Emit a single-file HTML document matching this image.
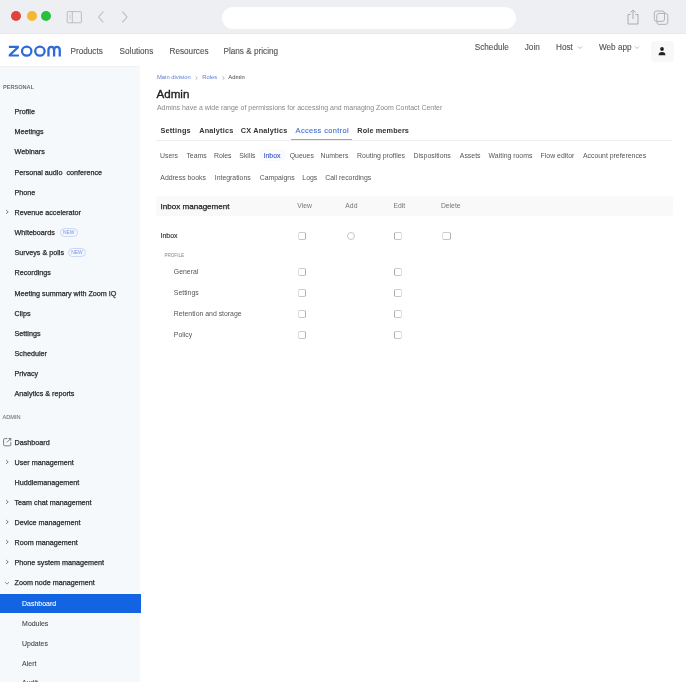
<!DOCTYPE html>
<html><head><meta charset="utf-8"><style>
html,body{margin:0;padding:0;}
body{width:686px;height:682px;overflow:hidden;position:relative;background:#fff;font-family:"Liberation Sans", sans-serif;}
#root{position:absolute;left:0;top:0;width:686px;height:682px;overflow:hidden;background:#fff;filter:blur(0.35px);}
.abs{position:absolute;}
.t{position:absolute;white-space:pre;line-height:1;}
.cb{position:absolute;width:6.3px;height:6.3px;border:0.8px solid #d2d2d2;background:#fff;}
</style></head><body><div id="root">
<!-- browser toolbar -->
<div class="abs" style="left:0;top:0;width:686px;height:34px;background:#edeff2;"></div>
<div class="abs" style="left:0;top:32.6px;width:686px;height:1.2px;background:#e6e8eb;"></div>
<div class="abs" style="left:11.2px;top:11.2px;width:10px;height:10px;border-radius:50%;background:#e0443e;"></div>
<div class="abs" style="left:26.5px;top:11.2px;width:10px;height:10px;border-radius:50%;background:#f5b731;"></div>
<div class="abs" style="left:41.3px;top:11.2px;width:10px;height:10px;border-radius:50%;background:#27c13d;"></div>
<svg class="abs" style="left:66px;top:11px" width="17" height="13" viewBox="0 0 17 13"><rect x="1.2" y="0.6" width="14.2" height="11.2" rx="0.8" fill="none" stroke="#b4b7bb" stroke-width="0.9"/><line x1="6.3" y1="0.6" x2="6.3" y2="11.8" stroke="#b4b7bb" stroke-width="0.9"/><path d="M3.9 3.6 V8.4" stroke="#c4c6c9" stroke-width="0.7"/></svg>
<svg class="abs" style="left:96px;top:10px" width="10" height="14" viewBox="0 0 10 14"><path d="M7.3 1.6 L2.6 7 L7.3 12.4" fill="none" stroke="#b9bcc0" stroke-width="1.05"/></svg>
<svg class="abs" style="left:120px;top:10px" width="10" height="14" viewBox="0 0 10 14"><path d="M2.4 1.6 L7.1 7 L2.4 12.4" fill="none" stroke="#b9bcc0" stroke-width="1.05"/></svg>
<div class="abs" style="left:222px;top:6.5px;width:293.5px;height:22px;border-radius:11px;background:#fff;"></div>
<svg class="abs" style="left:626px;top:9px" width="14" height="16" viewBox="0 0 14 16"><path d="M4.5 5.5 H2 V15 H12 V5.5 H9.5 M7 10 V1 M4.3 3.6 L7 1 L9.7 3.6" fill="none" stroke="#a9acb0" stroke-width="1"/></svg>
<svg class="abs" style="left:653px;top:10px" width="17" height="16" viewBox="0 0 17 16"><rect x="1.3" y="1.0" width="10.2" height="10.4" rx="2.2" fill="none" stroke="#a9acb0" stroke-width="0.9"/><rect x="3.8" y="3.4" width="11" height="11" rx="2.2" fill="none" stroke="#a9acb0" stroke-width="0.9"/></svg>

<!-- header -->
<svg class="abs" style="left:0;top:0" width="70" height="66" viewBox="0 0 70 66">
<g fill="none" stroke="#2d6bd9" stroke-width="2.3">
</g><path fill="#2d6bd9" d="M8.9 45.75 H18.9 V47.9 L12.0 54.45 H18.9 V56.6 H8.7 V54.45 L15.6 47.9 H8.9 Z"/><g fill="none" stroke="#2d6bd9" stroke-width="2.3">
<ellipse cx="26.7" cy="51.15" rx="4.7" ry="4.45"/>
<ellipse cx="39.9" cy="51.15" rx="4.7" ry="4.45"/>
<path d="M48.45 56.6 V50.2 Q48.45 46.85 51.3 46.85 Q54.1 46.85 54.1 50.2 V56.6 M54.1 50.2 Q54.1 46.85 56.95 46.85 Q59.75 46.85 59.75 50.2 V56.6"/>
</g></svg>
<svg class="abs" style="left:577px;top:45px" width="6" height="5" viewBox="0 0 6 5"><path d="M1 1.5 L3 3.5 L5 1.5" fill="none" stroke="#aaa" stroke-width="0.8"/></svg>
<svg class="abs" style="left:634.3px;top:45px" width="6" height="5" viewBox="0 0 6 5"><path d="M1 1.5 L3 3.5 L5 1.5" fill="none" stroke="#aaa" stroke-width="0.8"/></svg>
<div class="abs" style="left:651px;top:40.5px;width:22.5px;height:21px;border-radius:3px;background:#f8f8f9;"></div>
<svg class="abs" style="left:657px;top:46px" width="10" height="10" viewBox="0 0 10 10"><circle cx="5" cy="3" r="1.9" fill="#222"/><path d="M1.6 9.2 Q1.6 5.9 5 5.9 Q8.4 5.9 8.4 9.2 Z" fill="#222"/></svg>

<!-- sidebar -->
<div class="abs" style="left:0;top:66px;width:140px;height:616px;background:#f5f9fc;border-top:1px solid #f0f1f3;"></div>
<div class="abs" style="left:0;top:593.8px;width:140.6px;height:19px;background:#1364e2;"></div>
<svg class="abs" style="left:4.800000000000001px;top:209.0px" width="5" height="6" viewBox="0 0 5 6"><path d="M1.1 1.0 L3.2 2.9 L1.1 4.8" fill="none" stroke="#666" stroke-width="0.85"/></svg>
<svg class="abs" style="left:4.800000000000001px;top:458.7px" width="5" height="6" viewBox="0 0 5 6"><path d="M1.1 1.0 L3.2 2.9 L1.1 4.8" fill="none" stroke="#666" stroke-width="0.85"/></svg>
<svg class="abs" style="left:4.800000000000001px;top:499.0px" width="5" height="6" viewBox="0 0 5 6"><path d="M1.1 1.0 L3.2 2.9 L1.1 4.8" fill="none" stroke="#666" stroke-width="0.85"/></svg>
<svg class="abs" style="left:4.800000000000001px;top:519.15px" width="5" height="6" viewBox="0 0 5 6"><path d="M1.1 1.0 L3.2 2.9 L1.1 4.8" fill="none" stroke="#666" stroke-width="0.85"/></svg>
<svg class="abs" style="left:4.800000000000001px;top:539.3px" width="5" height="6" viewBox="0 0 5 6"><path d="M1.1 1.0 L3.2 2.9 L1.1 4.8" fill="none" stroke="#666" stroke-width="0.85"/></svg>
<svg class="abs" style="left:4.800000000000001px;top:559.45px" width="5" height="6" viewBox="0 0 5 6"><path d="M1.1 1.0 L3.2 2.9 L1.1 4.8" fill="none" stroke="#666" stroke-width="0.85"/></svg>
<svg class="abs" style="left:4.0px;top:580.7px" width="7" height="5" viewBox="0 0 7 5"><path d="M1.2 1.2 L3.1 3.0 L5.0 1.2" fill="none" stroke="#666" stroke-width="0.75"/></svg>
<svg class="abs" style="left:2px;top:437px" width="10" height="10" viewBox="0 0 10 10"><path d="M5.3 1.6 H2.6 Q1.6 1.6 1.6 2.6 V7.8 Q1.6 8.8 2.6 8.8 H7.8 Q8.8 8.8 8.8 7.8 V5.2" fill="none" stroke="#666" stroke-width="0.85"/><path d="M4.9 5.4 L8.6 1.7 M6.6 1.5 H8.8 V3.7" fill="none" stroke="#555" stroke-width="0.8"/></svg>
<div class="abs" style="left:60px;top:228.3px;width:17.5px;height:8.5px;border-radius:4.5px;border:0.8px solid #c9d8f5;background:#f3f7ff;box-sizing:border-box;"></div>
<div class="abs" style="left:68.2px;top:248.4px;width:17.5px;height:8.5px;border-radius:4.5px;border:0.8px solid #c9d8f5;background:#f3f7ff;box-sizing:border-box;"></div>
<div class="t" style="left:63.0px;top:230.9px;font-size:4.9px;color:#7b96db;">NEW</div>
<div class="t" style="left:71.2px;top:251.0px;font-size:4.9px;color:#7b96db;">NEW</div>
<svg class="abs" style="left:194px;top:75px" width="5" height="6" viewBox="0 0 5 6"><path d="M1.5 1.3 L3.3 3 L1.5 4.7" fill="none" stroke="#999" stroke-width="0.7"/></svg>
<svg class="abs" style="left:220.8px;top:75px" width="5" height="6" viewBox="0 0 5 6"><path d="M1.5 1.3 L3.3 3 L1.5 4.7" fill="none" stroke="#999" stroke-width="0.7"/></svg>

<!-- main -->
<div class="abs" style="left:156px;top:139.5px;width:516px;height:1px;background:#ededed;"></div>
<div class="abs" style="left:291.2px;top:138.8px;width:61.2px;height:1.2px;background:#88a5e4;"></div>
<div class="abs" style="left:156px;top:196.2px;width:517px;height:20.0px;background:#f9f9f9;border-radius:2px;"></div>
<div class="abs" style="left:259px;top:149px;width:27px;height:12px;border-radius:6px;background:#f8faff;"></div>
<div class="cb" style="left:297.9px;top:231.5px;border-radius:1.8px;border-color:#cdcdcd #b0b0b0 #c6c6c6 #dedede;"></div><div class="cb" style="left:394.2px;top:231.5px;border-radius:1.8px;border-color:#cdcdcd #e0e0e0 #c6c6c6 #acacac;"></div><div class="cb" style="left:442.4px;top:231.5px;border-radius:1.8px;border-color:#cdcdcd #b0b0b0 #c6c6c6 #dedede;"></div><div class="cb" style="left:346.5px;top:231.5px;border-radius:4px;border-color:#c8c8c8;"></div><div class="cb" style="left:297.9px;top:267.5px;border-radius:1.8px;border-color:#cdcdcd #b0b0b0 #c6c6c6 #dedede;"></div><div class="cb" style="left:394.2px;top:267.5px;border-radius:1.8px;border-color:#cdcdcd #e0e0e0 #c6c6c6 #acacac;"></div><div class="cb" style="left:297.9px;top:288.5px;border-radius:1.8px;border-color:#cdcdcd #b0b0b0 #c6c6c6 #dedede;"></div><div class="cb" style="left:394.2px;top:288.5px;border-radius:1.8px;border-color:#cdcdcd #e0e0e0 #c6c6c6 #acacac;"></div><div class="cb" style="left:297.9px;top:309.5px;border-radius:1.8px;border-color:#cdcdcd #b0b0b0 #c6c6c6 #dedede;"></div><div class="cb" style="left:394.2px;top:309.5px;border-radius:1.8px;border-color:#cdcdcd #e0e0e0 #c6c6c6 #acacac;"></div><div class="cb" style="left:297.9px;top:330.5px;border-radius:1.8px;border-color:#cdcdcd #b0b0b0 #c6c6c6 #dedede;"></div><div class="cb" style="left:394.2px;top:330.5px;border-radius:1.8px;border-color:#cdcdcd #e0e0e0 #c6c6c6 #acacac;"></div>

<div class="t" style="left:70.47px;top:47.63px;font-size:8.2px;font-weight:400;color:#555;-webkit-text-stroke:0.12px #555">Products</div>
<div class="t" style="left:119.57px;top:47.63px;font-size:8.2px;font-weight:400;color:#555;-webkit-text-stroke:0.12px #555">Solutions</div>
<div class="t" style="left:169.47px;top:47.63px;font-size:8.2px;font-weight:400;color:#555;-webkit-text-stroke:0.12px #555">Resources</div>
<div class="t" style="left:223.47px;top:47.63px;font-size:8.2px;font-weight:400;color:#555;-webkit-text-stroke:0.12px #555">Plans &amp; pricing</div>
<div class="t" style="left:474.77px;top:43.83px;font-size:8.2px;font-weight:400;color:#555;-webkit-text-stroke:0.12px #555">Schedule</div>
<div class="t" style="left:524.77px;top:43.83px;font-size:8.2px;font-weight:400;color:#555;-webkit-text-stroke:0.12px #555">Join</div>
<div class="t" style="left:556.07px;top:43.83px;font-size:8.2px;font-weight:400;color:#555;-webkit-text-stroke:0.12px #555">Host</div>
<div class="t" style="left:598.97px;top:43.83px;font-size:8.2px;font-weight:400;color:#555;-webkit-text-stroke:0.12px #555">Web app</div>
<div class="t" style="left:2.98px;top:84.87px;font-size:5.6px;font-weight:700;color:#707070;">PERSONAL</div>
<div class="t" style="left:14.51px;top:108.16px;font-size:7.2px;font-weight:400;color:#2a2a2a;-webkit-text-stroke:0.25px #2a2a2a">Profile</div>
<div class="t" style="left:14.51px;top:128.31px;font-size:7.2px;font-weight:400;color:#2a2a2a;-webkit-text-stroke:0.25px #2a2a2a">Meetings</div>
<div class="t" style="left:14.51px;top:148.46px;font-size:7.2px;font-weight:400;color:#2a2a2a;-webkit-text-stroke:0.25px #2a2a2a">Webinars</div>
<div class="t" style="left:14.51px;top:168.61px;font-size:7.2px;font-weight:400;color:#2a2a2a;-webkit-text-stroke:0.25px #2a2a2a">Personal audio  conference</div>
<div class="t" style="left:14.51px;top:188.76px;font-size:7.2px;font-weight:400;color:#2a2a2a;-webkit-text-stroke:0.25px #2a2a2a">Phone</div>
<div class="t" style="left:14.51px;top:208.91px;font-size:7.2px;font-weight:400;color:#2a2a2a;-webkit-text-stroke:0.25px #2a2a2a">Revenue accelerator</div>
<div class="t" style="left:14.51px;top:229.06px;font-size:7.2px;font-weight:400;color:#2a2a2a;-webkit-text-stroke:0.25px #2a2a2a">Whiteboards</div>
<div class="t" style="left:14.51px;top:249.21px;font-size:7.2px;font-weight:400;color:#2a2a2a;-webkit-text-stroke:0.25px #2a2a2a">Surveys &amp; polls</div>
<div class="t" style="left:14.51px;top:269.36px;font-size:7.2px;font-weight:400;color:#2a2a2a;-webkit-text-stroke:0.25px #2a2a2a">Recordings</div>
<div class="t" style="left:14.51px;top:289.51px;font-size:7.2px;font-weight:400;color:#2a2a2a;-webkit-text-stroke:0.25px #2a2a2a">Meeting summary with Zoom IQ</div>
<div class="t" style="left:14.51px;top:309.66px;font-size:7.2px;font-weight:400;color:#2a2a2a;-webkit-text-stroke:0.25px #2a2a2a">Clips</div>
<div class="t" style="left:14.51px;top:329.81px;font-size:7.2px;font-weight:400;color:#2a2a2a;-webkit-text-stroke:0.25px #2a2a2a">Settings</div>
<div class="t" style="left:14.51px;top:349.96px;font-size:7.2px;font-weight:400;color:#2a2a2a;-webkit-text-stroke:0.25px #2a2a2a">Scheduler</div>
<div class="t" style="left:14.51px;top:370.11px;font-size:7.2px;font-weight:400;color:#2a2a2a;-webkit-text-stroke:0.25px #2a2a2a">Privacy</div>
<div class="t" style="left:14.51px;top:390.26px;font-size:7.2px;font-weight:400;color:#2a2a2a;-webkit-text-stroke:0.25px #2a2a2a">Analytics &amp; reports</div>
<div class="t" style="left:2.58px;top:415.27px;font-size:5.6px;font-weight:400;color:#777;-webkit-text-stroke:0.1px #777">ADMIN</div>
<div class="t" style="left:14.51px;top:439.06px;font-size:7.2px;font-weight:400;color:#2a2a2a;-webkit-text-stroke:0.25px #2a2a2a">Dashboard</div>
<div class="t" style="left:14.51px;top:458.51px;font-size:7.2px;font-weight:400;color:#2a2a2a;-webkit-text-stroke:0.25px #2a2a2a">User management</div>
<div class="t" style="left:14.51px;top:478.66px;font-size:7.2px;font-weight:400;color:#2a2a2a;-webkit-text-stroke:0.25px #2a2a2a">Huddlemanagement</div>
<div class="t" style="left:14.51px;top:498.81px;font-size:7.2px;font-weight:400;color:#2a2a2a;-webkit-text-stroke:0.25px #2a2a2a">Team chat management</div>
<div class="t" style="left:14.51px;top:518.96px;font-size:7.2px;font-weight:400;color:#2a2a2a;-webkit-text-stroke:0.25px #2a2a2a">Device management</div>
<div class="t" style="left:14.51px;top:539.11px;font-size:7.2px;font-weight:400;color:#2a2a2a;-webkit-text-stroke:0.25px #2a2a2a">Room management</div>
<div class="t" style="left:14.51px;top:559.26px;font-size:7.2px;font-weight:400;color:#2a2a2a;-webkit-text-stroke:0.25px #2a2a2a">Phone system management</div>
<div class="t" style="left:14.51px;top:579.41px;font-size:7.2px;font-weight:400;color:#2a2a2a;-webkit-text-stroke:0.25px #2a2a2a">Zoom node management</div>
<div class="t" style="left:22.12px;top:600.69px;font-size:6.95px;font-weight:400;color:#ffffff;-webkit-text-stroke:0.08px #fff">Dashboard</div>
<div class="t" style="left:22.12px;top:620.69px;font-size:6.95px;font-weight:400;color:#444;-webkit-text-stroke:0.08px #444">Modules</div>
<div class="t" style="left:22.12px;top:640.99px;font-size:6.95px;font-weight:400;color:#444;-webkit-text-stroke:0.08px #444">Updates</div>
<div class="t" style="left:22.12px;top:661.29px;font-size:6.95px;font-weight:400;color:#444;-webkit-text-stroke:0.08px #444">Alert</div>
<div class="t" style="left:22.12px;top:680.09px;font-size:6.95px;font-weight:400;color:#444;-webkit-text-stroke:0.08px #444">Audit</div>
<div class="t" style="left:156.97px;top:75.04px;font-size:5.85px;font-weight:400;color:#5b7fd6;">Main division</div>
<div class="t" style="left:202.27px;top:75.04px;font-size:5.85px;font-weight:400;color:#5b7fd6;">Roles</div>
<div class="t" style="left:228.27px;top:75.04px;font-size:5.85px;font-weight:400;color:#444;">Admin</div>
<div class="t" style="left:156.54px;top:87.69px;font-size:11.6px;font-weight:400;color:#222;-webkit-text-stroke:0.35px #222">Admin</div>
<div class="t" style="left:156.92px;top:104.69px;font-size:6.95px;font-weight:400;color:#888;">Admins have a wide range of permissions for accessing and managing Zoom Contact Center</div>
<div class="t" style="left:160.41px;top:126.65px;font-size:7.3px;font-weight:700;color:#333;letter-spacing:0.2px">Settings</div>
<div class="t" style="left:199.21px;top:126.65px;font-size:7.3px;font-weight:700;color:#333;letter-spacing:0.2px">Analytics</div>
<div class="t" style="left:240.71px;top:126.65px;font-size:7.3px;font-weight:700;color:#333;letter-spacing:0.2px">CX Analytics</div>
<div class="t" style="left:295.60px;top:126.63px;font-size:7.4px;font-weight:400;color:#4070d8;letter-spacing:0.38px;-webkit-text-stroke:0.12px #4070d8">Access control</div>
<div class="t" style="left:357.31px;top:126.65px;font-size:7.3px;font-weight:700;color:#333;letter-spacing:0.12px">Role members</div>
<div class="t" style="left:160.02px;top:152.60px;font-size:6.9px;font-weight:400;color:#555;">Users</div>
<div class="t" style="left:186.42px;top:152.60px;font-size:6.9px;font-weight:400;color:#555;">Teams</div>
<div class="t" style="left:213.92px;top:152.60px;font-size:6.9px;font-weight:400;color:#555;">Roles</div>
<div class="t" style="left:239.32px;top:152.60px;font-size:6.9px;font-weight:400;color:#555;">Skills</div>
<div class="t" style="left:263.62px;top:152.60px;font-size:6.9px;font-weight:400;color:#4864c4;-webkit-text-stroke:0.18px #4864c4">Inbox</div>
<div class="t" style="left:289.72px;top:152.60px;font-size:6.9px;font-weight:400;color:#555;">Queues</div>
<div class="t" style="left:320.42px;top:152.60px;font-size:6.9px;font-weight:400;color:#555;">Numbers</div>
<div class="t" style="left:357.12px;top:152.60px;font-size:6.9px;font-weight:400;color:#555;">Routing profiles</div>
<div class="t" style="left:413.62px;top:152.60px;font-size:6.9px;font-weight:400;color:#555;">Dispositions</div>
<div class="t" style="left:459.82px;top:152.60px;font-size:6.9px;font-weight:400;color:#555;">Assets</div>
<div class="t" style="left:488.62px;top:152.60px;font-size:6.9px;font-weight:400;color:#555;">Waiting rooms</div>
<div class="t" style="left:540.62px;top:152.60px;font-size:6.9px;font-weight:400;color:#555;">Flow editor</div>
<div class="t" style="left:582.92px;top:152.60px;font-size:6.9px;font-weight:400;color:#555;">Account preferences</div>
<div class="t" style="left:160.32px;top:174.90px;font-size:6.9px;font-weight:400;color:#555;">Address books</div>
<div class="t" style="left:214.72px;top:174.90px;font-size:6.9px;font-weight:400;color:#555;">Integrations</div>
<div class="t" style="left:259.72px;top:174.90px;font-size:6.9px;font-weight:400;color:#555;">Campaigns</div>
<div class="t" style="left:302.32px;top:174.90px;font-size:6.9px;font-weight:400;color:#555;">Logs</div>
<div class="t" style="left:325.22px;top:174.90px;font-size:6.9px;font-weight:400;color:#555;">Call recordings</div>
<div class="t" style="left:160.58px;top:202.55px;font-size:8.05px;font-weight:400;color:#1e1e1e;-webkit-text-stroke:0.25px #1e1e1e">Inbox management</div>
<div class="t" style="left:297.23px;top:203.11px;font-size:6.8px;font-weight:400;color:#777;">View</div>
<div class="t" style="left:345.33px;top:203.11px;font-size:6.8px;font-weight:400;color:#777;">Add</div>
<div class="t" style="left:393.43px;top:203.11px;font-size:6.8px;font-weight:400;color:#777;">Edit</div>
<div class="t" style="left:440.93px;top:203.11px;font-size:6.8px;font-weight:400;color:#777;">Delete</div>
<div class="t" style="left:160.62px;top:232.90px;font-size:6.9px;font-weight:400;color:#333;-webkit-text-stroke:0.15px #333">Inbox</div>
<div class="t" style="left:164.42px;top:254.00px;font-size:4.6px;font-weight:400;color:#888;">PROFILE</div>
<div class="t" style="left:173.82px;top:268.90px;font-size:6.9px;font-weight:400;color:#555;">General</div>
<div class="t" style="left:173.82px;top:289.90px;font-size:6.9px;font-weight:400;color:#555;">Settings</div>
<div class="t" style="left:173.82px;top:310.90px;font-size:6.9px;font-weight:400;color:#555;">Retention and storage</div>
<div class="t" style="left:173.82px;top:331.90px;font-size:6.9px;font-weight:400;color:#555;">Policy</div>
</div></body></html>
